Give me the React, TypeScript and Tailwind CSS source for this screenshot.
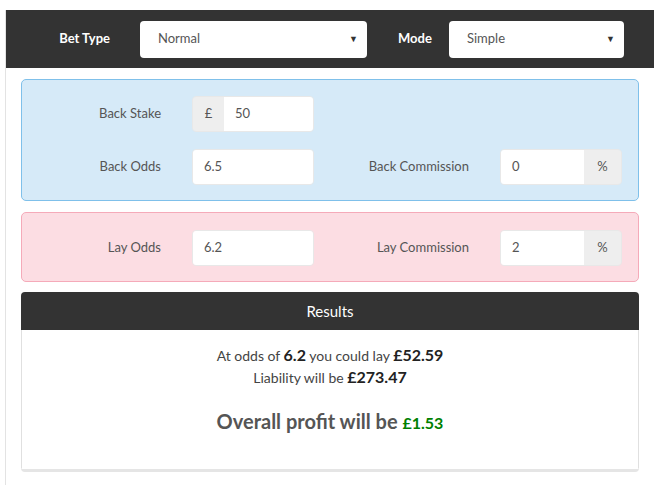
const font = { fontFamily: 'Lato, "Open Sans", sans-serif' };

function Select({ value, width }: { value: string; width: string }) {
  return (
    <div className={`${width} h-[37px] bg-white rounded-[4px] flex items-center justify-between pl-[18px] pr-[9px]`}>
      <span className="text-[13px] text-[#555]">{value}</span>
      <span className="text-[9px] text-[#333]">▼</span>
    </div>
  );
}

function Field({ value, prefix, suffix }: { value: string; prefix?: string; suffix?: string }) {
  return (
    <div className="w-[122px] h-[36px] flex rounded-[4px] overflow-hidden border border-[#e8e8e8]">
      {prefix && (
        <div className="w-[31px] bg-[#eeeeee] flex items-center justify-center text-[13px] text-[#555]">{prefix}</div>
      )}
      <div className="flex-1 bg-white flex items-center px-[11px] text-[13px] text-[#555]">{value}</div>
      {suffix && (
        <div className="w-[37px] bg-[#eeeeee] flex items-center justify-center text-[13px] text-[#555]">{suffix}</div>
      )}
    </div>
  );
}

function Label({ text, width }: { text: string; width: string }) {
  return <div className={`${width} text-right text-[13px] text-[#555]`}>{text}</div>;
}

export default function App() {
  return (
    <div className="w-[654px] h-[485px] bg-white overflow-hidden pt-[10px]" style={font}>
      <div className="ml-[5px] border-l border-[#e3e3e3] h-full">
        <div className="h-[58px] bg-[#333333] flex items-center">
          <div className="w-[104px] text-right text-[13px] font-bold text-white">Bet Type</div>
          <div className="ml-[30px]">
            <Select value="Normal" width="w-[227px]" />
          </div>
          <div className="ml-[31px] w-[32px] text-[13px] font-bold text-white">Mode</div>
          <div className="ml-[19px]">
            <Select value="Simple" width="w-[175px]" />
          </div>
        </div>

        <div className="px-[15px] pt-[11px] flex flex-col gap-[11px]">
          <div className="bg-[#d6eaf8] border border-[#7fc0ea] rounded-[5px] pt-[16px] pb-[15px] flex flex-col gap-[17px]">
            <div className="flex items-center">
              <Label text="Back Stake" width="w-[139px]" />
              <div className="ml-[31px]">
                <Field prefix="£" value="50" />
              </div>
            </div>
            <div className="flex items-center">
              <Label text="Back Odds" width="w-[139px]" />
              <div className="ml-[31px]">
                <Field value="6.5" />
              </div>
              <Label text="Back Commission" width="w-[155px]" />
              <div className="ml-[31px]">
                <Field value="0" suffix="%" />
              </div>
            </div>
          </div>

          <div className="bg-[#fcdde3] border border-[#f5aab9] rounded-[5px] pt-[17px] pb-[15px]">
            <div className="flex items-center">
              <Label text="Lay Odds" width="w-[139px]" />
              <div className="ml-[31px]">
                <Field value="6.2" />
              </div>
              <Label text="Lay Commission" width="w-[155px]" />
              <div className="ml-[31px]">
                <Field value="2" suffix="%" />
              </div>
            </div>
          </div>

          <div className="-mt-[1px] rounded-[4px] overflow-hidden border-b-[3px] border-[#e5e5e5]">
            <div className="h-[38px] bg-[#333333] flex items-center justify-center text-[15px] text-white">Results</div>
            <div className="h-[139px] bg-white border-x border-[#e0e0e0] flex flex-col items-center pt-[14px]">
              <div className="text-[14px] text-[#444] leading-[21px]">
                At odds of <span className="text-[16px] font-bold text-[#222]">6.2</span> you could lay{' '}
                <span className="text-[16px] font-bold text-[#222]">£52.59</span>
              </div>
              <div className="text-[14px] text-[#444] leading-[21px]">
                Liability will be <span className="text-[16px] font-bold text-[#222]">£273.47</span>
              </div>
              <div className="mt-[21px] text-[20px] leading-[24px] font-bold text-[#555]">
                Overall profit will be <span className="text-[16px] text-[#008000]">£1.53</span>
              </div>
            </div>
          </div>
        </div>
      </div>
    </div>
  );
}
